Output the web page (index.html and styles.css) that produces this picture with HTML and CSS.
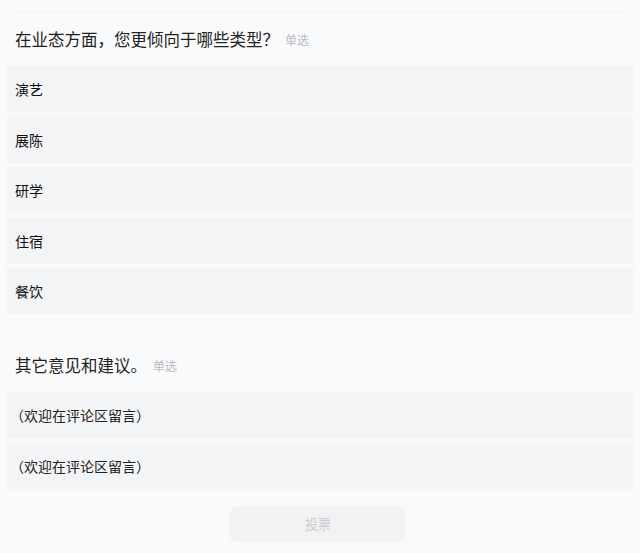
FILE: index.html
```html
<!DOCTYPE html>
<html lang="zh">
<head>
<meta charset="utf-8">
<link rel="stylesheet" href="styles.css">
</head>
<body>
<div class="page">
  <div class="top-edge"></div>
  <section class="question q1">
    <div class="q-title">在业态方面，您更倾向于哪些类型？<span class="tag">单选</span></div>
    <div class="options">
      <div class="option">演艺</div>
      <div class="option">展陈</div>
      <div class="option">研学</div>
      <div class="option">住宿</div>
      <div class="option">餐饮</div>
    </div>
  </section>
  <section class="question q2">
    <div class="q-title">其它意见和建议。<span class="tag">单选</span></div>
    <div class="options">
      <div class="option light">（欢迎在评论区留言）</div>
      <div class="option light">（欢迎在评论区留言）</div>
    </div>
  </section>
  <div class="actions">
    <button class="vote">投票</button>
  </div>
</div>
</body>
</html>
```

FILE: styles.css
```css
html, body {
  margin: 0;
  padding: 0;
  background: #f9fafc;
}
body {
  font-family: "Noto Sans CJK SC", "Noto Sans", sans-serif;
  color: #1e1e1e;
}
.page {
  width: 640px;
  height: 553px;
  overflow: hidden;
  padding: 0 6px;
  box-sizing: border-box;
}
.top-edge {
  height: 11px;
  border-bottom: 1px solid #f2f3f6;
  margin: 0 10px;
}
.q-title {
  height: 54px;
  display: flex;
  align-items: center;
  padding-left: 9px;
  font-size: 16.5px;
  color: #222;
}
.tag {
  font-size: 12px;
  color: #b8babe;
  margin-left: 6px;
}
.q2 .tag {
  margin-left: 6px;
}
.options {
  display: flex;
  flex-direction: column;
  gap: 4.5px;
}
.option {
  height: 46px;
  background: #f3f4f6;
  display: flex;
  align-items: center;
  padding-left: 9px;
  font-size: 14px;
  font-weight: 400;
  color: #111;
  border-radius: 3px;
}
.option.light {
  color: #222;
  padding-left: 4px;
}
.q2 {
  margin-top: 24px;
}
.actions {
  display: flex;
  justify-content: center;
  margin-top: 17px;
}
.vote {
  width: 176px;
  height: 36px;
  border: none;
  border-radius: 7px;
  background: #f1f2f4;
  color: #c8cacd;
  font-family: "Noto Sans CJK SC", sans-serif;
  font-size: 13px;
  margin-left: -4px;
}
```
